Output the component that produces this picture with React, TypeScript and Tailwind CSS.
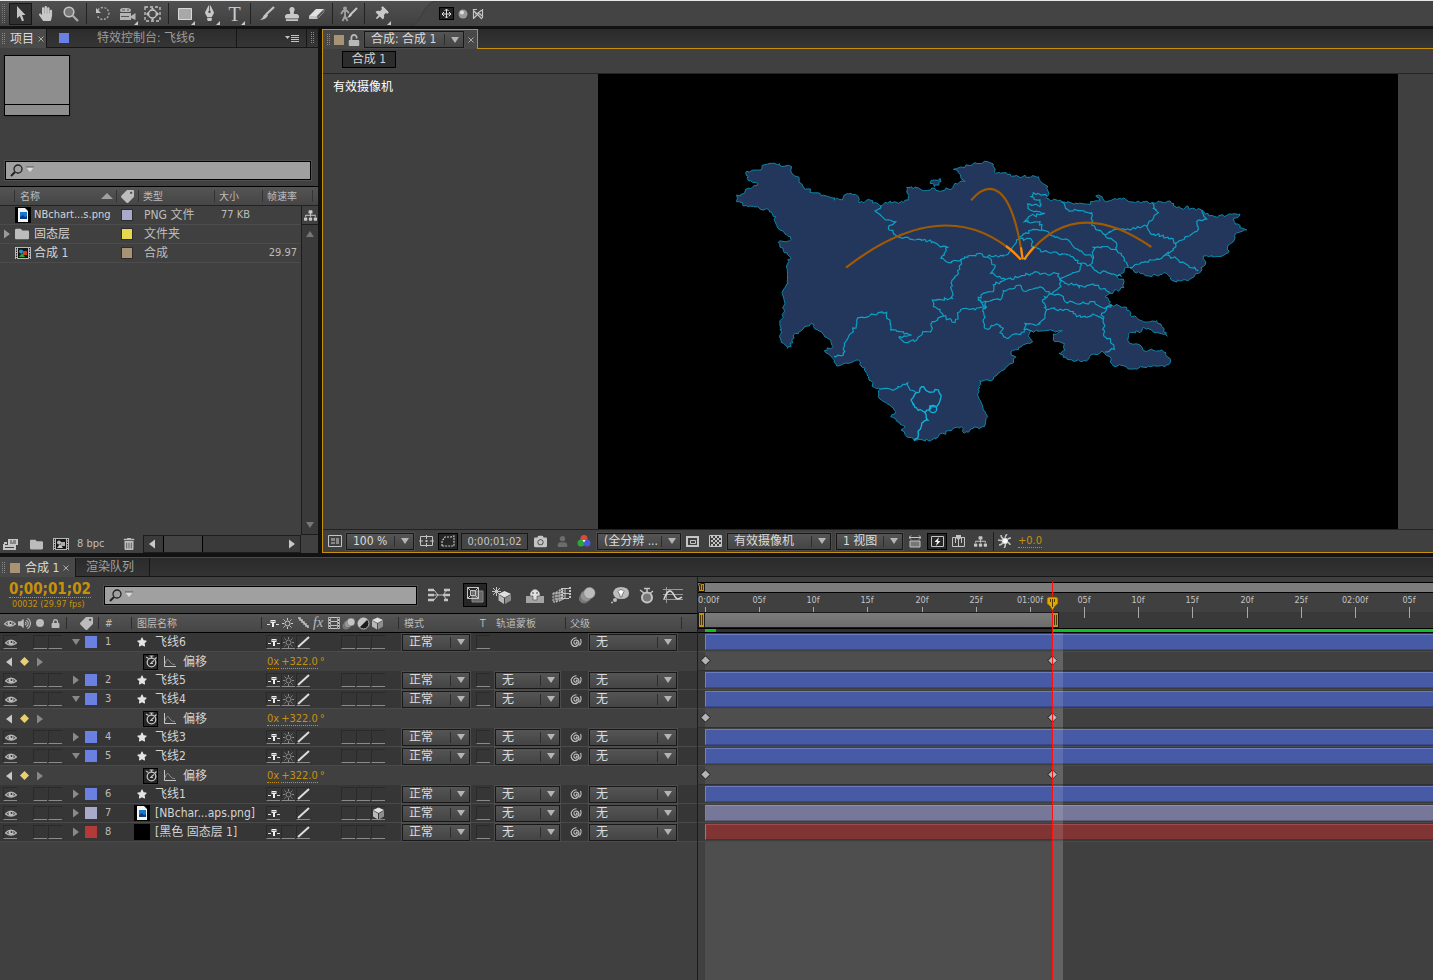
import type { ReactNode } from 'react';
import {
    FaHandPaper, FaStamp, FaThumbtack, FaFolder, FaTrashAlt, FaTag, FaSitemap,
    FaCamera, FaUser, FaLock, FaUnlock, FaVolumeUp, FaStar, FaPenNib
} from 'react-icons/fa';

type Point = [number, number];

interface Layer {
    id: number;
    name: string;
    color: string;
    bar: string;
    kind: 'shape' | 'image' | 'solid';
    open?: boolean;
    matte?: boolean;
    cube?: boolean;
}

const BLUE = 'bg-[#6a80e2]';
const BLUE_BAR = 'bg-[#475aa6] border-t-[#6c7cc0] border-b-[#37488e]';

const layers: Layer[] = [
    { id: 1, name: '飞线6', color: BLUE, bar: BLUE_BAR, kind: 'shape', open: true },
    { id: 2, name: '飞线5', color: BLUE, bar: BLUE_BAR, kind: 'shape', matte: true },
    { id: 3, name: '飞线4', color: BLUE, bar: BLUE_BAR, kind: 'shape', open: true, matte: true },
    { id: 4, name: '飞线3', color: BLUE, bar: BLUE_BAR, kind: 'shape', matte: true },
    { id: 5, name: '飞线2', color: BLUE, bar: BLUE_BAR, kind: 'shape', open: true, matte: true },
    { id: 6, name: '飞线1', color: BLUE, bar: BLUE_BAR, kind: 'shape', matte: true },
    { id: 7, name: '[NBchar...aps.png]', color: 'bg-[#a9a9cb]', bar: 'bg-[#77779a] border-t-[#8e8eb0] border-b-[#5c5c7a]', kind: 'image', matte: true, cube: true },
    { id: 8, name: '[黑色 固态层 1]', color: 'bg-[#b43a3a]', bar: 'bg-[#803434] border-t-[#a04a4a] border-b-[#662424]', kind: 'solid', matte: true },
];

/* ---------- map ---------- */

const coast: Point[] = [
    [35, 135], [58, 130], [62, 118], [98, 100], [72, 93], [62, 68], [88, 60], [108, 60], [112, 46], [135, 40], [180, 48], [200, 50],
    [198, 65], [222, 82], [228, 100], [240, 118], [285, 130], [290, 138], [352, 150], [358, 135], [378, 130], [400, 140], [402, 158],
    [435, 150], [452, 158], [468, 168], [480, 157], [535, 158], [550, 150], [545, 112], [580, 114], [590, 120], [620, 114], [638, 122],
    [685, 112], [690, 100], [720, 95], [700, 68], [685, 58], [720, 52], [745, 40], [778, 34], [805, 42], [812, 70], [855, 72], [870, 78],
    [940, 80], [945, 92], [968, 108], [972, 132], [965, 145], [1010, 156], [1080, 162], [1125, 152], [1112, 138], [1125, 138], [1138, 153],
    [1170, 145], [1195, 144], [1210, 154], [1280, 158], [1335, 153], [1345, 168], [1375, 178], [1385, 168], [1392, 178], [1430, 180],
    [1440, 192], [1470, 200], [1545, 192], [1525, 205], [1530, 222], [1565, 240], [1532, 252], [1525, 275], [1510, 285], [1508, 310],
    [1485, 320], [1435, 318], [1442, 335], [1420, 370], [1390, 392], [1345, 393], [1325, 370], [1270, 378], [1225, 360], [1205, 352],
    [1190, 370], [1175, 380], [1197, 395], [1197, 412], [1155, 430], [1140, 440], [1160, 465], [1205, 472], [1220, 500], [1250, 512],
    [1295, 512], [1310, 530], [1327, 558], [1280, 540], [1255, 532], [1250, 543], [1210, 552], [1212, 578], [1245, 585], [1255, 602],
    [1310, 600], [1337, 630], [1325, 645], [1270, 648], [1225, 657], [1195, 647], [1165, 648], [1155, 620], [1135, 606], [1105, 612],
    [1090, 628], [1050, 634], [1015, 622], [1002, 610], [1020, 600], [1018, 580], [990, 575], [985, 552], [1012, 542], [920, 543],
    [910, 558], [923, 575], [890, 590], [858, 605], [872, 622], [862, 640], [830, 662], [805, 688], [765, 692], [760, 740], [788, 800],
    [778, 830], [745, 835], [718, 850], [710, 830], [670, 842], [620, 870], [568, 872], [528, 840], [540, 830], [497, 800], [512, 785],
    [495, 765], [460, 740], [465, 718], [448, 712], [430, 680], [400, 630], [385, 635], [335, 648], [328, 630], [298, 602], [325, 590],
    [305, 562], [258, 520], [205, 555], [198, 590], [188, 595], [168, 570], [165, 520], [178, 480], [172, 430], [190, 400], [188, 330],
    [197, 322], [178, 308], [160, 278], [198, 268], [165, 240], [150, 215], [152, 200], [132, 180], [70, 170], [35, 155], [35, 135],
];

const island: Point[] = [[615, 100], [628, 90], [645, 85], [648, 95], [628, 110], [615, 100]];

const borders: Point[][] = [
    [[468, 168], [450, 183], [482, 210], [512, 215], [490, 235], [515, 258], [540, 262], [565, 270], [600, 268], [640, 285], [668, 292], [648, 325], [670, 338], [708, 328], [765, 310], [775, 320], [845, 315], [860, 295], [875, 270], [920, 240], [950, 240], [945, 215], [898, 215], [910, 200], [960, 190], [915, 180], [908, 162], [945, 170], [945, 150], [918, 140], [925, 128], [965, 138]],
    [[708, 328], [700, 370], [680, 395], [682, 445], [622, 450], [625, 470], [645, 478], [655, 498], [690, 518], [705, 485], [725, 475], [750, 480], [785, 470]],
    [[328, 618], [355, 615], [358, 580], [385, 545], [395, 510], [435, 497], [485, 487], [497, 540], [560, 555], [522, 562], [538, 577], [575, 570], [600, 545], [620, 540], [622, 515], [655, 498]],
    [[790, 322], [810, 345], [797, 370], [840, 388]],
    [[785, 470], [760, 450], [775, 430], [805, 425], [805, 405], [840, 388], [885, 380], [930, 365], [945, 373], [995, 370], [1005, 385], [1065, 360], [1065, 340], [1035, 315], [955, 305], [920, 290], [920, 270], [885, 265]],
    [[765, 455], [785, 455], [830, 445], [835, 422], [885, 405], [895, 423], [945, 410], [980, 432], [1008, 410], [1005, 385]],
    [[1005, 385], [1020, 400], [1080, 412], [1105, 402], [1155, 428]],
    [[980, 432], [1015, 440], [1020, 455], [1080, 460], [1100, 455], [1140, 475], [1160, 465]],
    [[980, 432], [952, 450], [965, 480], [960, 505], [935, 525], [900, 520], [898, 540], [920, 543]],
    [[965, 478], [1020, 478], [1045, 485], [1055, 500], [1110, 495], [1135, 508]],
    [[1160, 465], [1130, 490], [1135, 508], [1138, 560], [1155, 565], [1168, 598], [1140, 606]],
    [[783, 455], [775, 475], [777, 530], [790, 538], [815, 522], [835, 535], [825, 548], [845, 565], [900, 545]],
    [[1010, 156], [1030, 180], [1100, 188], [1100, 225], [1140, 255], [1175, 280], [1175, 300], [1155, 295], [1130, 290], [1105, 292], [1105, 325], [1095, 345], [1110, 362], [1155, 370], [1190, 380]],
    [[1140, 255], [1170, 238], [1220, 238], [1265, 228], [1280, 212], [1300, 188], [1285, 175], [1280, 158]],
    [[1265, 228], [1275, 248], [1340, 265], [1352, 280], [1345, 300], [1320, 315], [1310, 325], [1260, 335], [1215, 352]],
    [[1352, 280], [1415, 245], [1420, 210], [1445, 207], [1430, 182]],
    [[1320, 315], [1360, 330], [1420, 362]],
    [[1175, 300], [1195, 320], [1210, 350]],
    [[950, 240], [990, 262], [1030, 270], [1050, 295], [1105, 325]],
    [[1065, 340], [1095, 345]],
    [[465, 718], [510, 718], [548, 698], [555, 720], [575, 728]],
];

const brightBorders: Point[][] = [
    [[575, 728], [558, 750], [570, 772], [600, 788], [612, 780], [615, 768], [635, 770], [648, 735], [640, 720], [610, 725], [590, 710], [575, 728]],
    [[600, 788], [608, 810], [590, 820], [580, 855], [568, 872]],
];

// breaks every segment into short steps and nudges them so borders look surveyed
function rough(points: Point[]) {
    let d = `M${points[0][0]} ${points[0][1]}`;
    for (let i = 1; i < points.length; i++) {
        const [ax, ay] = points[i - 1];
        const [bx, by] = points[i];
        const steps = Math.max(1, Math.round(Math.hypot(bx - ax, by - ay) / 7));
        for (let s = 1; s <= steps; s++) {
            const t = s / steps;
            const n = Math.sin(ax * 12.9 + by * 78.2 + s * 37.7) * 43758.5;
            const m = Math.sin(ay * 39.3 + bx * 11.1 + s * 83.1) * 24634.6;
            const jx = s === steps ? 0 : (n - Math.floor(n) - 0.5) * 9;
            const jy = s === steps ? 0 : (m - Math.floor(m) - 0.5) * 9;
            d += `L${(ax + (bx - ax) * t + jx).toFixed(1)} ${(ay + (by - ay) * t + jy).toFixed(1)}`;
        }
    }
    return d;
}

function FlightMap() {
    return (
        <svg viewBox="-381 -228 2400 1365" className="w-[800px] max-w-full h-[455px]" fill="none">
            <path d={rough(coast)} fill="#22375b" stroke="#0f86a6" strokeWidth="3" />
            <path d={rough(island)} fill="#22375b" stroke="#0f86a6" strokeWidth="3" />
            {borders.map((b, i) => <path key={i} d={rough(b)} stroke="#0ba4c8" strokeWidth="3.500" />)}
            {brightBorders.map((b, i) => <path key={i} d={rough(b)} stroke="#10b4dc" strokeWidth="4" />)}
            <circle cx="624" cy="777" r="11" stroke="#10b4dc" strokeWidth="4" />
            <g stroke="#a05a04" strokeWidth="6.500">
                <path d="M363 353C560 200 740 180 888 328" />
                <path d="M738 151C790 90 860 90 893 328" />
                <path d="M898 328C1000 188 1130 188 1279 291" />
            </g>
            <path d="M843 288Q866 304 887 329M888 292L893 328M928 290Q912 306 898 329" stroke="#ff8c0c" strokeWidth="6.500" />
        </svg>
    );
}

/* ---------- small icons ---------- */

function Svg({ w, h, children, className = '' }: { w: number; h: number; children: ReactNode; className?: string }) {
    return (
        <svg width={w} height={h} viewBox={`0 0 ${w} ${h}`} fill="none" stroke="#c4c4c4" className={`shrink-0 ${className}`} aria-hidden="true">
            {children}
        </svg>
    );
}

const Grip = () => (
    <Svg w={4} h={12}>
        <path d="M.5 0V12M2.500 0V12" stroke="#8a8a8a" strokeDasharray="1 1" />
    </Svg>
);

const Magnifier = () => (
    <Svg w={24} h={13}>
        <circle cx="8" cy="5" r="4" stroke="#222" strokeWidth="1.300" />
        <path d="M5 8L1 12" stroke="#222" strokeWidth="2" />
        <path d="M16 3H24L20 8Z" fill="#dcdcdc" stroke="none" />
        <path d="M16 3H24" stroke="#555" />
    </Svg>
);

const Eye = () => (
    <Svg w={12} h={9}>
        <path d="M.5 5Q6 -1 11.500 5Q6 9.500 .5 5Z" fill="#4a4a4a" stroke="#b5b5b5" strokeWidth="1.200" />
        <circle cx="6" cy="4.500" r="2.500" fill="#c0c0c0" stroke="none" />
        <circle cx="6.500" cy="4" r="1" fill="#333" stroke="none" />
    </Svg>
);

const Shy = () => (
    <Svg w={12} h={8}>
        <path d="M0 5.500H3M9 5.500H12" stroke="#ddd" />
        <path d="M3.500 1H8.500V4H7V8H5V4H3.500Z" fill="#eee" stroke="none" />
        <path d="M4.500 2.500H5.500M6.500 2.500H7.500" stroke="#222" />
    </Svg>
);

const Sun = ({ color = '#8c8c8c' }: { color?: string }) => (
    <Svg w={11} h={11}>
        <circle cx="5.500" cy="5.500" r="2.500" stroke={color} />
        <path d="M5.500 0V2M5.500 9V11M0 5.500H2M9 5.500H11M1.500 1.500L2.800 2.800M8.200 8.200L9.500 9.500M1.500 9.500L2.800 8.200M8.200 2.800L9.500 1.500" stroke={color} />
    </Svg>
);

const Slash = () => <Svg w={13} h={12}><path d="M1 11L12 1" stroke="#dcdcdc" strokeWidth="2" /></Svg>;

const Pickwhip = () => (
    <Svg w={12} h={11}>
        <path d="M6 5.500Q7.500 4.500 7 6.500Q5 8 4 6Q3.500 3 6.500 3Q9 3.500 9 6.500Q7.500 10 4 9.500Q1 8 1.200 4.500Q3 .8 6.500 .8M10.500 2Q12 6 9.500 8.500" stroke="#c0c0c0" strokeWidth="1.100" />
    </Svg>
);

const Down = ({ color = '#b4b4b4' }: { color?: string }) => <Svg w={8} h={6}><path d="M0 0H8L4 6Z" fill={color} stroke="none" /></Svg>;
const Right = ({ color = '#9a9a9a' }: { color?: string }) => <Svg w={6} h={10}><path d="M0 .5L6 5L0 9.500Z" fill={color} stroke="none" /></Svg>;
const Left = ({ color = '#c8c8c8' }: { color?: string }) => <Svg w={6} h={10}><path d="M6 .5L0 5L6 9.500Z" fill={color} stroke="none" /></Svg>;

const PngFile = () => (
    <Svg w={16} h={16}>
        <path d="M0 0H16V16H0Z" fill="#000" stroke="none" />
        <path d="M3 1H10L13 4V15H3Z" fill="#f4f4f4" stroke="none" />
        <path d="M5 5H12V12H5Z" fill="#1878d0" stroke="none" />
        <path d="M5 12V10L8 8L10 10L12 9V12Z" fill="#0a3c80" stroke="none" />
    </Svg>
);

const CompItem = ({ color = true }: { color?: boolean }) => (
    <Svg w={16} h={12}>
        <path d="M0 0H16V12H0Z" fill="#b8b8b8" stroke="none" />
        <path d="M1.500 1V12M14.500 1V12" stroke="#222" strokeDasharray="1.500 1" />
        <path d="M3 1H13V11H3Z" fill="#161616" stroke="none" />
        <circle cx="6" cy="4.500" r="2" fill={color ? '#2b8fd0' : '#bbb'} stroke="none" />
        <path d="M8 4H12V8H8Z" fill={color ? '#d04020' : '#aaa'} stroke="none" />
        <path d="M4 10L7 6L10 10Z" fill={color ? '#28a838' : '#ccc'} stroke="none" />
    </Svg>
);

const Film = () => (
    <Svg w={12} h={12}>
        <path d="M1.500 0V12M10.500 0V12" strokeWidth="2.500" />
        <path d="M1.500 1V12M10.500 1V12" stroke="#333" strokeDasharray="1 2" />
        <path d="M3 .5H9M3 4.500H9M3 8.500H9M3 11.500H9" />
    </Svg>
);

const Balls = () => (
    <Svg w={14} h={13}>
        <circle cx="4" cy="9" r="3.500" fill="#777" stroke="none" />
        <circle cx="6" cy="7" r="3.800" fill="#999" stroke="#555" strokeWidth=".5" />
        <circle cx="9" cy="5" r="4" fill="#c4c4c4" stroke="#555" strokeWidth=".5" />
    </Svg>
);

const Half = () => (
    <Svg w={13} h={13}>
        <circle cx="6.500" cy="6.500" r="5.500" fill="#1c1c1c" />
        <path d="M2.500 10.500A5.500 5.500 0 0 1 10.500 2.500Z" fill="#c4c4c4" stroke="none" />
    </Svg>
);

const Cube = () => (
    <Svg w={13} h={13}>
        <path d="M6.500 .5L12 3L6.500 6L1 3Z" fill="#e0e0e0" stroke="none" />
        <path d="M1 3.500L6 6.500V12.500L1 9.500Z" fill="#b8b8b8" stroke="none" />
        <path d="M12 3.500L7 6.500V12.500L12 9.500Z" fill="#8e8e8e" stroke="none" />
    </Svg>
);

const Diamond = () => (
    <Svg w={11} h={11} className="block">
        <path d="M5.500 .8L10.200 5.500L5.500 10.200L.8 5.500Z" fill="#b4b4b4" stroke="#181818" />
    </Svg>
);

const Stopwatch = () => (
    <Svg w={12} h={13}>
        <circle cx="6.500" cy="7.500" r="4.300" strokeWidth="1.300" />
        <path d="M6.500 3V1M4.500 1H8.500M1 2L3.500 3.500M9.500 4.500L11.500 2.500M6 8L9 5.500M5 8.500H8" strokeWidth="1.200" />
    </Svg>
);

const Graph = () => (
    <Svg w={12} h={11}>
        <path d="M.5 0V10.500H12" stroke="#c8c8c8" />
        <path d="M1 8Q3 0 6 6Q8 9 11 8.500" stroke="#8a8a8a" />
    </Svg>
);

/* ---------- shared controls ---------- */

function Dropdown({ label, value, width }: { label: string; value: string; width: string }) {
    return (
        <div className={`relative shrink-0 h-[17px] border border-[#181818] bg-linear-to-b from-[#555555] to-[#444444] outline outline-[#4c4c4c] ${width}`}>
            <select aria-label={label} className="appearance-none block w-full h-full pl-[6px] pr-[18px] text-[12px] leading-[15px] text-[#dcdcdc] outline-none">
                <option>{value}</option>
            </select>
            <span className="absolute right-0 top-0 h-full flex items-center gap-[6px] pr-1 pointer-events-none">
                <span className="w-px h-[11px] bg-[#2c2c2c]" />
                <Down />
            </span>
        </div>
    );
}

function Search({ id, className }: { id: string; className: string }) {
    return (
        <label htmlFor={id} className={`flex shrink-0 items-center h-[19px] px-1 bg-[#a0a0a0] border border-black outline outline-[#505050] ${className}`}>
            <Magnifier />
            <input id={id} aria-label="搜索" className="flex-1 min-w-0 text-[11px] text-black outline-none" />
        </label>
    );
}

function Close() {
    return (
        <button className="px-1 flex items-center" aria-label="关闭">
            <Svg w={6} h={6}><path d="M.5 .5L5.500 5.500M5.500 .5L.5 5.500" stroke="#aaa" /></Svg>
        </button>
    );
}

/* ---------- tool bar ---------- */

function Tool({ name, children, active, more }: { name: string; children: ReactNode; active?: boolean; more?: boolean }) {
    return (
        <button title={name} className="relative w-[25px] h-[24px] flex items-center justify-center text-[#c8c8c8]">
            {active ? <span className="w-[23px] h-[22px] flex items-center justify-center bg-[#303030] border border-[#161616]">{children}</span> : children}
            {more && <span className="absolute right-[2px] bottom-px"><Svg w={4} h={4}><path d="M4 0V4H0Z" fill="#c8c8c8" stroke="none" /></Svg></span>}
        </button>
    );
}

const ToolGap = () => <span className="w-[7px] flex justify-center shrink-0"><span className="w-px h-[21px] bg-[#222]" /></span>;

function ToolBar() {
    return (
        <header className="flex items-center h-[26px] border-t border-[#e8e8e8] bg-linear-to-b from-[#505050] to-[#404040]">
            <span className="w-2 pl-[2px]"><Svg w={4} h={20}><path d="M.5 0V20M2.500 0V20" stroke="#7a7a7a" strokeDasharray="1 1" /></Svg></span>
            <Tool name="选择" active>
                <Svg w={10} h={16}><path d="M1 0L9.500 9H6L8 14.500L6 15.300L3.800 10L1 12.500Z" fill="#c4c4c4" stroke="none" /></Svg>
            </Tool>
            <Tool name="手形"><FaHandPaper size={15} /></Tool>
            <Tool name="缩放">
                <Svg w={16} h={16}>
                    <circle cx="6" cy="6" r="4.800" fill="#777" strokeWidth="1.600" />
                    <path d="M9.500 9.500L15 15" strokeWidth="2.200" stroke="#aaa" />
                </Svg>
            </Tool>
            <ToolGap />
            <Tool name="旋转">
                <Svg w={16} h={15}>
                    <path d="M3 4A6 6 0 1 1 2.500 10" stroke="#aaa" strokeWidth="1.400" strokeDasharray="2 1.500" />
                    <path d="M1 2V7H6Z" fill="#c4c4c4" stroke="none" />
                </Svg>
            </Tool>
            <Tool name="摄像机" more>
                <Svg w={17} h={14}>
                    <path d="M1 6H12V13H1ZM12 9L16.500 6V13L12 11Z" fill="#b4b4b4" stroke="none" />
                    <path d="M1 3.500Q1 1 4 1H8Q12 1 12 3.500Q12 5 9 5H4Q1 5 1 3.500Z" fill="#b4b4b4" stroke="none" />
                    <path d="M3 3H6M8 3H10M2 9.500H10" stroke="#555" />
                </Svg>
            </Tool>
            <Tool name="轴心点">
                <Svg w={17} h={16}>
                    <path d="M1 1H16V15H1Z" strokeDasharray="3 2" strokeWidth="1.300" />
                    <circle cx="8.500" cy="8" r="4" strokeWidth="1.500" />
                    <path d="M6.500 3.500L8.500 1.500L10.500 3.500ZM6.500 12.500L8.500 14.500L10.500 12.500ZM4 6L2 8L4 10ZM13 6L15 8L13 10Z" fill="#c4c4c4" stroke="none" />
                </Svg>
            </Tool>
            <ToolGap />
            <Tool name="矩形遮罩" more><Svg w={14} h={12}><path d="M.5 .5H13.500V11.500H.5Z" fill="#a8a8a8" stroke="#d8d8d8" /></Svg></Tool>
            <Tool name="钢笔" more><span className="-rotate-[225deg]"><FaPenNib size={13} /></span></Tool>
            <Tool name="文字" more><span className="font-['Liberation_Serif',serif] text-[20px] leading-none">T</span></Tool>
            <ToolGap />
            <Tool name="画笔">
                <Svg w={16} h={15}>
                    <path d="M15 1L7 8.500" strokeWidth="2.200" />
                    <path d="M7.500 7.500L9 9.500Q7 13.500 1 14Q4 12 5 9Z" fill="#c4c4c4" stroke="none" />
                </Svg>
            </Tool>
            <Tool name="仿制图章"><FaStamp size={14} /></Tool>
            <Tool name="橡皮擦">
                <Svg w={17} h={12}>
                    <path d="M1 8L8 1H16L9 8Z" fill="#e0e0e0" stroke="none" />
                    <path d="M1 8H9V11H1Z" fill="#c4c4c4" stroke="none" />
                    <path d="M9 8L16 1V4L9 11Z" fill="#555" stroke="#aaa" strokeWidth=".6" />
                </Svg>
            </Tool>
            <ToolGap />
            <Tool name="Roto 画笔">
                <Svg w={18} h={16}>
                    <circle cx="5" cy="2.500" r="2" fill="#a0a0a0" stroke="none" />
                    <path d="M5 4V10L2.500 15M5 10L7.500 15M1 8L3 5H7L9 7" stroke="#a0a0a0" strokeWidth="1.800" />
                    <path d="M17 2L11 8" strokeWidth="2" />
                    <path d="M11 7L12 9Q10 12 7 12Q9 10 9.500 8Z" fill="#d0d0d0" stroke="none" />
                </Svg>
            </Tool>
            <ToolGap />
            <Tool name="木偶大头针" more><span className="rotate-45"><FaThumbtack size={14} /></span></Tool>
            <Svg w={44} h={25}><path d="M18 25C30 22 30 0 44 0V25Z" fill="#454545" stroke="none" /><path d="M18 25C30 22 30 0 44 0" stroke="#3c3c3c" /></Svg>
            <div className="flex-1 self-stretch flex items-center gap-[4px] bg-[#444] pl-[2px]">
                <button title="本地轴" className="w-[15px] h-[13px] flex items-center justify-center bg-[#222] border border-black">
                    <Svg w={11} h={11}><path d="M5.500 1V10M1 6H10M3.500 3L5.500 1L7.500 3M3 4L1 6L3 8M8 4L10 6L8 8M4 8.500L5.500 10L7 8.500" stroke="#ddd" /></Svg>
                </button>
                <button title="世界轴"><Svg w={10} h={10}><circle cx="5" cy="5" r="4.500" fill="#9a9a9a" stroke="none" /><circle cx="4" cy="3.500" r="2" fill="#ddd" stroke="none" /></Svg></button>
                <button title="视图轴"><Svg w={12} h={12}><path d="M1.500 1V11M1 1.500H5M10.500 1V10M10.500 1.500L6 5L10.500 8M2 3L10 11M2 10L7 5M3 6H9" strokeWidth="1.200" /></Svg></button>
            </div>
        </header>
    );
}

/* ---------- project panel ---------- */

const items = [
    { icon: <PngFile />, name: 'NBchart...s.png', color: 'bg-[#a9a9cb]', type: 'PNG 文件', size: '77 KB', rate: '' },
    { icon: <FaFolder size={14} className="text-[#bcbcbc]" />, name: '固态层', color: 'bg-[#e6d94c]', type: '文件夹', size: '', rate: '', folder: true },
    { icon: <CompItem />, name: '合成 1', color: 'bg-[#a89474]', type: '合成', size: '', rate: '29.97' },
];

function ProjectPanel() {
    return (
        <section className="w-[318px] shrink-0 flex flex-col bg-[#404040]">
            <div className="flex h-[19px] bg-linear-to-b from-[#2c2c2c] to-[#363636]">
                <div className="w-[46px] flex items-center pl-[2px] gap-1 bg-[#4a4a4a] text-[#dcdcdc] text-[12px]">
                    <Grip />
                    <button className="shrink-0">项目</button>
                    <Svg w={6} h={6}><path d="M.5 .5L5.500 5.500M5.500 .5L.5 5.500" stroke="#aaa" /></Svg>
                </div>
                <button className="w-[191px] flex items-center pl-3 border-x border-b border-[#161616] text-[12px] text-[#9c9c9c]">
                    <span className={`w-[10px] h-[10px] ${BLUE}`} />
                    <span className="flex-1 pr-[13px]">特效控制台: 飞线6</span>
                </button>
                <div className="flex-1 flex items-center justify-end pr-[7px] border-b border-[#161616]">
                    <button title="面板菜单">
                        <Svg w={14} h={9}><path d="M0 2H5L2.500 5Z" fill="#c4c4c4" stroke="none" /><path d="M6 1.500H14M6 3.500H14M6 5.500H14M6 7.500H14" /></Svg>
                    </button>
                </div>
                <div className="w-[12px] flex items-center justify-center border-l border-b border-[#161616]"><Grip /></div>
            </div>

            <div className="p-1 pt-[7px] h-[112px]">
                <div className="w-[66px] h-[61px] border border-black bg-[#8e8e8e] flex flex-col justify-end shadow">
                    <div className="h-[11px] border-t border-black" />
                </div>
            </div>
            <Search id="project-search" className="mx-[5px] mr-[7px] mt-[1px] mb-[6px]" />

            <div className="flex-1 flex border-t border-black">
                <div className="flex-1">
                    <table className="w-full table-fixed border-separate border-spacing-0 text-left text-[#bcbcbc]">
                        <colgroup>
                            <col className="w-[14px]" /><col className="w-[102px]" /><col className="w-[22px]" /><col className="w-[76px]" /><col className="w-[48px]" /><col />
                        </colgroup>
                        <thead>
                            <tr className="h-[19px] text-[10px] bg-linear-to-b from-[#545454] to-[#454545] [&>th]:p-0 [&>th]:font-normal [&>th]:border-b [&>th]:border-[#222]">
                                <th />
                                <th>
                                    <div className="flex items-center justify-between h-3 border-l border-[#333] pl-[5px] pr-[3px]">
                                        名称
                                        <Svg w={12} h={6}><path d="M0 6L6 0L12 6Z" fill="#a0a0a0" stroke="none" /></Svg>
                                    </div>
                                </th>
                                <th><div className="flex items-center justify-center h-3 border-l border-[#333]"><FaTag size={13} className="-scale-x-100 shrink-0" /></div></th>
                                <th><div className="flex items-center h-3 border-l border-[#333] pl-1">类型</div></th>
                                <th><div className="flex items-center h-3 border-l border-[#333] pl-1">大小</div></th>
                                <th><div className="flex items-center h-3 border-l border-[#333] pl-1 whitespace-nowrap">帧速率</div></th>
                            </tr>
                        </thead>
                        <tbody>
                            {items.map((it) => (
                                <tr key={it.name} className="h-[19px] text-[12px] leading-[18px] [&>td]:p-0 [&>td]:border-b [&>td]:border-[#4c4c4c]">
                                    <td>{it.folder && <button aria-label="展开" className="flex pl-1"><Right /></button>}</td>
                                    <td><div className={`flex items-center h-[18px] whitespace-nowrap pl-px text-[#d4d4d4] ${it.size ? 'text-[11px]' : ''}`}><span className="w-[19px] shrink-0">{it.icon}</span>{it.name}</div></td>
                                    <td><div className={`w-[10px] h-[10px] mx-auto ${it.color} outline outline-[#2c2c2c]`} /></td>
                                    <td className="!pl-[6px] whitespace-nowrap">{it.type}</td>
                                    <td className="!pl-[7px] whitespace-nowrap text-[11px]">{it.size}</td>
                                    <td className="!pr-1 text-right text-[11px]">{it.rate}</td>
                                </tr>
                            ))}
                        </tbody>
                    </table>
                </div>
                <div className="w-[17px] flex flex-col">
                    <div className="h-[19px] bg-linear-to-b from-[#545454] to-[#454545] border-b border-[#222] flex items-center pl-[11px]"><span className="w-px h-3 bg-[#333]" /></div>
                    <button title="流程图" className="h-[19px] flex items-center justify-center border-l border-b border-[#1c1c1c] text-[#c8c8c8]"><FaSitemap size={13} /></button>
                    <div className="flex-1 flex flex-col items-center justify-between py-[6px] border-l border-b border-[#1c1c1c] bg-[#3a3a3a]">
                        <span className="rotate-180"><Down color="#777" /></span>
                        <Down color="#777" />
                    </div>
                </div>
            </div>

            <div className="flex items-center h-[18px] text-[#bcbcbc] text-[11px]">
                <button title="解释素材" className="w-[25px] pl-[3px]">
                    <Svg w={16} h={12}><path d="M5 1H15V7H5Z" fill="#c8c8c8" stroke="none" /><path d="M7 3H9M10 3H13M7 5H13" stroke="#444" /><path d="M1 5H4M0 8H12V11H1V6" strokeWidth="2" /></Svg>
                </button>
                <button title="新建文件夹" className="w-[22px] flex justify-center"><FaFolder size={13} /></button>
                <button title="新建合成" className="w-[28px] flex justify-center"><CompItem color={false} /></button>
                <button className="w-[44px] pl-[2px] text-left whitespace-nowrap">8 bpc</button>
                <button title="删除" className="w-[20px] flex justify-center"><FaTrashAlt size={12} /></button>
                <div className="flex-1 flex items-center h-full border border-[#1c1c1c] bg-[#3a3a3a] ml-1 pl-[5px] pr-[5px] mr-[17px]">
                    <Left />
                    <span className="w-[40px] h-full ml-2 border-x border-black bg-[#444]" />
                    <span className="ml-auto"><Right color="#c8c8c8" /></span>
                </div>
            </div>
        </section>
    );
}

/* ---------- composition panel ---------- */

function FooterIcon({ name, width, boxed, children }: { name: string; width: string; boxed?: boolean; children: ReactNode }) {
    return (
        <button title={name} className={`shrink-0 h-[17px] flex items-center justify-center text-[#c4c4c4] ${width} ${boxed ? 'bg-[#262626] border border-black' : ''}`}>
            {children}
        </button>
    );
}

function CompPanel() {
    return (
        <section className="flex-1 min-w-0 flex flex-col bg-[#404040] border-l border-[#c8910c]">
            <div className="flex h-[20px]">
                <div className="w-[155px] shrink-0 flex items-center pl-1 border-t border-r border-[#c8910c] bg-[#484848] text-[12px]">
                    <Grip />
                    <span className="w-[10px] h-[10px] shrink-0 ml-[3px] bg-[#a89474]" />
                    <button title="锁定" className="ml-1 text-[#b8b8b8]"><FaUnlock size={12} /></button>
                    <div className="ml-1"><Dropdown label="合成" value="合成: 合成 1" width="w-[100px]" /></div>
                    <Close />
                </div>
                <div className="flex-1 border-b border-[#c8910c] bg-linear-to-b from-[#2a2a2a] to-[#363636]" />
            </div>
            <div className="h-[25px] flex items-start pt-[2px] pl-[19px] border-b border-[#242424]">
                <button className="h-[17px] w-[54px] bg-[#2c2c2c] border border-black text-[12px] leading-[15px] text-[#d4d4d4]">合成 1</button>
            </div>

            <div className="relative flex h-[455px]">
                <span className="absolute left-[10px] top-[5px] text-[12px] leading-[16px] text-white">有效摄像机</span>
                <div className="w-[275px] shrink-0" />
                <div className="flex-1 min-w-0 bg-black"><FlightMap /></div>
                <div className="w-[35px] shrink-0" />
            </div>

            <div className="flex items-center h-[24px] border-t border-[#222] border-b border-b-[#c8910c] text-[12px] text-[#c4c4c4]">
                <FooterIcon name="总在最前" width="w-[23px]"><Svg w={14} h={12}><path d="M.5 .5H13.500V11.500H.5Z" /><path d="M3 3H7V6H3ZM8 3H11V9H8ZM3 7H7V9H3Z" fill="#888" stroke="none" /></Svg></FooterIcon>
                <Dropdown label="放大率" value="100 %" width="w-[68px]" />
                <FooterIcon name="安全框" width="w-[24px]"><Svg w={15} h={13}><path d="M1.500 1.500H13.500V10.500H1.500ZM7.500 0V4M7.500 8V12M0 6H4M11 6H15M6 6H9M7.500 5V7" /></Svg></FooterIcon>
                <FooterIcon name="遮罩" width="w-[20px]" boxed><Svg w={14} h={12}><path d="M1 11V6L4 2H10L13 1V11Z" strokeDasharray="2 1" strokeWidth="1.200" /></Svg></FooterIcon>
                <button className="ml-[3px] w-[67px] shrink-0 h-[17px] border border-[#181818] bg-[#464646] text-[11px] leading-[15px] whitespace-nowrap text-center">0;00;01;02</button>
                <FooterIcon name="快照" width="w-[24px]"><FaCamera size={13} /></FooterIcon>
                <FooterIcon name="显示快照" width="w-[20px]"><FaUser size={11} className="text-[#6c6c6c]" /></FooterIcon>
                <FooterIcon name="通道" width="w-[25px]">
                    <Svg w={15} h={14}>
                        <circle cx="7" cy="4.500" r="3.500" fill="#e04838" stroke="none" />
                        <circle cx="4" cy="9" r="3.500" fill="#28a838" stroke="none" />
                        <circle cx="10" cy="9" r="3.500" fill="#4858d8" stroke="none" />
                        <path d="M5.500 6H8.500L7 8.500Z" fill="#fff" stroke="none" />
                    </Svg>
                </FooterIcon>
                <Dropdown label="分辨率" value="(全分辨 ..." width="w-[84px]" />
                <FooterIcon name="区域" width="w-[23px]"><Svg w={13} h={11}><path d="M1 1H12V10H1Z" strokeWidth="2" /><path d="M4.500 4.500H9.500V7.500H4.500Z" /></Svg></FooterIcon>
                <FooterIcon name="透明网格" width="w-[23px]">
                    <Svg w={13} h={12}><path d="M.5 .5H12.500V11.500H.5Z" /><path d="M2 2H12M2 6H12M2 10H12" strokeWidth="2" strokeDasharray="2 2" /><path d="M4 4H12M4 8H12" strokeWidth="2" strokeDasharray="2 2" /></Svg>
                </FooterIcon>
                <Dropdown label="视图" value="有效摄像机" width="w-[104px]" />
                <span className="w-[5px] shrink-0" />
                <Dropdown label="视图布局" value="1 视图" width="w-[67px]" />
                <FooterIcon name="像素比" width="w-[24px]"><Svg w={12} h={13}><path d="M0 2.500H12M2 .5L0 2.500L2 4.500M10 .5L12 2.500L10 4.500" /><path d="M1 6H11V12H1Z" fill="#777" /></Svg></FooterIcon>
                <FooterIcon name="快速预览" width="w-[20px]" boxed><Svg w={15} h={13}><path d="M1.500 1.500H13.500V11.500H1.500Z" /><path d="M9 2L4.500 7H7L6 11L10.500 6H8Z" fill="#eee" stroke="none" /></Svg></FooterIcon>
                <FooterIcon name="时间线" width="w-[23px]"><Svg w={13} h={12}><path d="M.5 2.500H12.500V11.500H.5ZM3.500 3V8M9.500 3V8M6.500 4V11" /><path d="M4 0H9V3L6.500 5L4 3Z" fill="#c4c4c4" stroke="none" /></Svg></FooterIcon>
                <FooterIcon name="流程图" width="w-[21px]"><FaSitemap size={13} /></FooterIcon>
                <span className="w-[5px] shrink-0 flex justify-center"><span className="w-px h-[19px] bg-[#1c1c1c]" /></span>
                <FooterIcon name="重置曝光" width="w-[18px]">
                    <Svg w={14} h={14}>
                        <circle cx="7" cy="7" r="3" fill="#fff" stroke="none" />
                        <path d="M3 1Q3 4 6 5M9 0Q7 2 7 5M13 4Q10 4 9 6M12 11Q12 9 9 8M6 14Q8 12 7 9M1 11Q4 11 5 8M0 6Q3 7 5 6" strokeWidth="1.500" />
                    </Svg>
                </FooterIcon>
                <button className="ml-1 text-[11px] leading-[13px] text-[#c8910c] border-b border-dotted border-[#c8910c]">+0.0</button>
            </div>
        </section>
    );
}

/* ---------- timeline: layer list ---------- */

const box = 'w-[14px] h-[14px] flex items-center justify-center border-t border-l border-b border-t-[#2a2a2a] border-l-[#2a2a2a] border-b-[#8a8a8a]';

function Cell({ label, children }: { label: string; children?: ReactNode }) {
    return <button aria-label={label} className={`${box} shrink-0`}>{children}</button>;
}

function LayerRow({ layer }: { layer: Layer }) {
    return (
        <tr className="h-[19px] bg-[#363636] text-[#bcbcbc] [&>td]:p-0 [&>td]:border-b [&>td]:border-[#4a4a4a]">
            <td>
                <div className="flex items-center pl-[3px]">
                    <Cell label="显示"><Eye /></Cell>
                    <span className="w-4" />
                    <Cell label="独奏" />
                    <span className="w-px" />
                    <Cell label="锁定" />
                </div>
            </td>
            <td>
                <div className="flex items-center">
                    <button aria-label="展开图层" className="w-[19px] flex justify-center shrink-0">{layer.open ? <Down color="#888" /> : <Right color="#8a8a8a" />}</button>
                    <span className={`w-3 h-3 shrink-0 ${layer.color}`} />
                </div>
            </td>
            <td className="!pl-[7px]">{layer.id}</td>
            <td>
                <div className="flex items-center h-[18px] pl-[3px] whitespace-nowrap text-[12px] text-[#d4d4d4]">
                    <span className="w-[16px] mr-[5px] flex justify-center shrink-0">
                        {layer.kind === 'shape' && <FaStar size={10} className="text-[#e4e4e4]" />}
                        {layer.kind === 'image' && <PngFile />}
                        {layer.kind === 'solid' && <span className="w-4 h-4 bg-black" />}
                    </span>
                    {layer.name}
                </div>
            </td>
            <td>
                <div className="flex items-center gap-px pl-[5px]">
                    <Cell label="隐藏"><Shy /></Cell>
                    {layer.kind === 'shape' && <Cell label="连续栅格化"><Sun /></Cell>}
                    {layer.kind === 'image' && <span className="w-[14px]" />}
                    {layer.kind === 'solid' && <Cell label="连续栅格化" />}
                    <Cell label="品质"><Slash /></Cell>
                    <span className="w-[29px]" />
                    <Cell label="运动模糊" />
                    <Cell label="调节层" />
                    <Cell label="3D 图层">{layer.cube && <Cube />}</Cell>
                </div>
            </td>
            <td className="!pl-1"><div className="flex"><Dropdown label={`模式 ${layer.id}`} value="正常" width="w-[68px]" /></div></td>
            <td><div className="flex pl-[3px]"><Cell label="保持透明" /></div></td>
            <td>{layer.matte && <div className="flex pl-[2px]"><Dropdown label={`轨道蒙板 ${layer.id}`} value="无" width="w-[65px]" /></div>}</td>
            <td>
                <div className="flex items-center pl-[5px]">
                    <span className="w-[19px]"><Pickwhip /></span>
                    <Dropdown label={`父级 ${layer.id}`} value="无" width="w-[88px]" />
                </div>
            </td>
            <td />
        </tr>
    );
}

function PropertyRow() {
    return (
        <tr className="h-[19px] bg-[#404040] [&>td]:p-0">
            <td>
                <div className="flex items-center pl-[6px]">
                    <button aria-label="上一关键帧"><Left /></button>
                    <button aria-label="关键帧" className="mx-2"><Svg w={9} h={9}><path d="M4.500 0L9 4.500L4.500 9L0 4.500Z" fill="#e8d070" stroke="none" /></Svg></button>
                    <button aria-label="下一关键帧"><Right color="#888" /></button>
                </div>
            </td>
            <td />
            <td />
            <td>
                <div className="flex items-center pl-[12px] text-[12px] leading-[16px] text-[#d4d4d4]">
                    <button aria-label="码表" className="w-[15px] h-[16px] mr-[6px] flex items-center justify-center bg-[#262626] border border-black"><Stopwatch /></button>
                    <Graph />
                    <span className="ml-[7px]">偏移</span>
                </div>
            </td>
            <td>
                <div className="flex items-start gap-[2px] pl-[6px] text-[11px] leading-[13px] text-[#c8910c]">
                    <button className="border-b border-dotted border-[#c8910c]">0x</button>
                    <button className="border-b border-dotted border-[#c8910c]">+322.0</button>
                    <span>°</span>
                </div>
            </td>
            <td colSpan={5} />
        </tr>
    );
}

function LayerTable() {
    return (
        <table className="w-full table-fixed border-separate border-spacing-0 text-left text-[11px]">
            <colgroup>
                <col className="w-[66px]" /><col className="w-[32px]" /><col className="w-[33px]" /><col className="w-[130px]" /><col className="w-[137px]" />
                <col className="w-[75px]" /><col className="w-[20px]" /><col className="w-[72px]" /><col className="w-[116px]" /><col />
            </colgroup>
            <thead>
                <tr className="h-[20px] text-[10px] text-[#bcbcbc] bg-linear-to-b from-[#545454] to-[#454545] [&>th]:p-0 [&>th]:font-normal [&>th]:border-y [&>th]:border-black">
                    <th>
                        <div className="flex items-center pl-1">
                            <Eye />
                            <FaVolumeUp size={13} className="ml-[2px]" />
                            <span className="w-2 h-2 rounded-full bg-[#bcbcbc] ml-[5px]" />
                            <FaLock size={9} className="ml-[7px]" />
                        </div>
                    </th>
                    <th><div className="flex items-center h-3 border-l border-[#2c2c2c] pl-[13px]"><FaTag size={13} className="-scale-x-100" /></div></th>
                    <th><div className="flex items-center h-3 border-l border-[#2c2c2c] pl-[6px]">#</div></th>
                    <th><div className="flex items-center h-3 border-l border-[#2c2c2c] pl-[5px]">图层名称</div></th>
                    <th>
                        <div className="flex items-center h-3 border-l border-[#2c2c2c] pl-[5px]">
                            <span className="w-[15px]"><Shy /></span>
                            <span className="w-[15px]"><Sun color="#d0d0d0" /></span>
                            <span className="w-[16px]"><Svg w={12} h={12}><path d="M1 1H3V3H5V5H7V7H9V9H11V11" strokeWidth="1.500" /></Svg></span>
                            <span className="w-[15px] font-['Liberation_Serif',serif] italic text-[14px] leading-3">fx</span>
                            <span className="w-[14px]"><Film /></span>
                            <span className="w-[15px]"><Balls /></span>
                            <span className="w-[14px]"><Half /></span>
                            <Cube />
                        </div>
                    </th>
                    <th><div className="flex items-center h-3 border-l border-[#2c2c2c] pl-[5px]">模式</div></th>
                    <th className="!pl-[7px]">T</th>
                    <th className="!pl-[3px]">轨道蒙板</th>
                    <th><div className="flex items-center h-3 border-l border-[#2c2c2c] pl-[4px]">父级</div></th>
                    <th><div className="h-3 border-l border-[#2c2c2c]" /></th>
                </tr>
            </thead>
            <tbody>
                {layers.map((l) => [
                    <LayerRow key={l.id} layer={l} />,
                    l.open && <PropertyRow key={`${l.id}-offset`} />,
                ])}
            </tbody>
        </table>
    );
}

/* ---------- timeline: tracks ---------- */

// x of the first frame inside the track area, and the pixels of one frame
const ORIGIN = 7;
const FRAME = 10.83;
const frameX = (frame: number) => Math.round(ORIGIN + frame * FRAME);
const tickLabels = ['0:00f', '05f', '10f', '15f', '20f', '25f', '01:00f', '05f', '10f', '15f', '20f', '25f', '02:00f', '05f'];

function Keyframe({ frame }: { frame: number }) {
    return <span className="absolute top-[3px] -ml-[5px]" style={{ left: frameX(frame) }}><Diamond /></span>;
}

const Handle = ({ className = '' }: { className?: string }) => (
    <span className={`shrink-0 flex items-center justify-center gap-px w-[7px] bg-[#c8910c] border border-[#1a1a1a] ${className}`}>
        <span className="w-px h-2/3 bg-[#4a3400]" />
        <span className="w-px h-2/3 bg-[#4a3400]" />
    </span>
);

function Tracks() {
    return (
        <div className="relative flex-1 min-w-0 flex flex-col overflow-hidden border-l border-[#1c1c1c]">
            <div className="flex h-[11px] mt-[5px] border-y border-black bg-[#7c7c7c]"><Handle className="rounded-tl" /></div>

            <div className="relative h-[19px] text-[9px] leading-[14px] text-[#c4c4c4]">
                {tickLabels.map((t, i) => (
                    <span key={i}>
                        <span className={`absolute top-0 ${i ? '-translate-x-1/2' : ''}`} style={{ left: i ? frameX(i * 5) : 0 }}>{t}</span>
                        <span className={`absolute top-[14px] w-px bg-[#a8a8a8] ${i > 6 ? 'h-[11px]' : 'h-[5px]'}`} style={{ left: frameX(i * 5) }} />
                    </span>
                ))}
            </div>
            <div className="flex h-[17px] bg-[#393939] border-b border-black">
                <Handle />
                <div className="w-[347px] shrink-0 bg-linear-to-b from-[#7c7c7c] to-[#6c6c6c] border-y border-[#1a1a1a]" />
                <Handle />
            </div>
            <div className="flex h-[3px] border-b border-black bg-[#303030] box-content">
                <span className="w-[7px]" />
                <span className="w-[11px] bg-[#14bc28]" />
                <span className="w-[336px]" />
                <span className="flex-1 bg-[#14bc28]" />
            </div>

            <div className="relative flex-1">
                <span className="absolute inset-y-0 left-[7px] w-[358px] bg-[#4e4e4e]" />
                <div className="relative">
                    {layers.map((l) => (
                        <div key={l.id}>
                            <div className="h-[19px] pl-[7px] border-b border-[#4a4a4a] bg-[#363636]/60 pt-px">
                                <div className={`h-4 border-y border-l border-l-[#8080a0] ${l.bar}`} />
                            </div>
                            {l.open && (
                                <div className="relative h-[19px] border-b border-[#303030]">
                                    <Keyframe frame={0} />
                                    <Keyframe frame={32} />
                                </div>
                            )}
                        </div>
                    ))}
                </div>
                <span className="absolute inset-y-0 left-[354px] w-[11px] bg-white/12" />
            </div>

            <span className="absolute top-[5px] bottom-0 left-[354px] w-px bg-[#ff1010]" />
            <span className="absolute top-[19px] left-[348px]">
                <Svg w={13} h={15}>
                    <path d="M1 3Q1 1 3 1H10Q12 1 12 3V8Q9 9 7 14H6Q4 9 1 8Z" fill="#e0a800" stroke="#6a4c00" strokeWidth=".8" />
                    <path d="M4.500 3V6M6.500 3V11M8.500 3V6" stroke="#4a3400" />
                </Svg>
            </span>
        </div>
    );
}

function TimelinePanel() {
    return (
        <section className="flex-1 flex flex-col bg-[#404040] mt-1">
            <div className="flex h-[20px] text-[12px] border-t border-[#4c4c4c] bg-linear-to-b from-[#2a2a2a] to-[#343434]">
                <div className="w-[75px] flex items-center pl-[2px] bg-[#484848] text-[#dcdcdc] whitespace-nowrap">
                    <Grip />
                    <span className="w-[10px] h-[10px] shrink-0 ml-1 mr-[5px] bg-[#a89474]" />
                    <button>合成 1</button>
                    <Close />
                </div>
                <button className="w-[75px] pr-[5px] border-x border-b border-[#161616] text-[#a4a4a4]">渲染队列</button>
                <div className="flex-1 border-b border-[#161616]" />
            </div>

            <div className="flex-1 flex">
                <div className="w-[697px] shrink-0">
                    <div className="flex items-center h-[36px] text-[#c8910c]">
                        <div className="w-[104px] shrink-0 pl-[9px] whitespace-nowrap">
                            <button className="block h-[17px] font-bold text-[15px] leading-[16px] border-b border-dotted border-[#c8910c]">0;00;01;02</button>
                            <div className="pl-[3px] text-[9px] leading-[12px]">00032 (29.97 fps)</div>
                        </div>
                        <Search id="layer-search" className="w-[313px]" />
                        <button title="流程图" className="w-[46px] flex justify-center">
                            <Svg w={24} h={14}><path d="M0 2H6M0 7H6M0 12H6" strokeWidth="2.500" /><path d="M6 2L10 7L6 12M6 7H15M15 7L19 2M15 7L19 12" /><path d="M16 2H22M16 7H22M16 12H20" strokeWidth="2.500" /></Svg>
                        </button>
                        <button title="即时更新" className="w-[24px] h-[24px] flex items-center justify-center bg-[#262626] border border-black">
                            <Svg w={18} h={18}><path d="M6 5H17V16H6Z" fill="#666" stroke="#888" /><path d="M1.500 1.500H12.500V12.500H1.500ZM4.500 4.500H9.500V9.500H4.500ZM1.500 1.500L4.500 4.500M12.500 1.500L9.500 4.500M1.500 12.500L4.500 9.500M12.500 12.500L9.500 9.500" /></Svg>
                        </button>
                        <button title="3D 草图" className="w-[29px] flex justify-center">
                            <Svg w={20} h={17}>
                                <path d="M4.500 0V9M0 4.500H9M1 1L8 8M8 1L1 8" />
                                <path d="M12.500 4L19 7L12.500 10.500L6.500 7Z" fill="#e0e0e0" stroke="none" />
                                <path d="M6.500 7.500L12 11V17L6.500 13.500Z" fill="#b8b8b8" stroke="none" />
                                <path d="M19 7.500L13 11V17L19 13.500Z" fill="#8a8a8a" stroke="none" />
                            </Svg>
                        </button>
                        <button title="隐藏图层" className="ml-[6px] w-[26px] flex justify-center">
                            <Svg w={18} h={15}><path d="M0 8H18V15H0Z" fill="#a4a4a4" stroke="none" /><path d="M4 5Q9 -3 14 5V8H11V12H7V8H4Z" fill="#e0e0e0" stroke="#444" strokeWidth=".6" /><path d="M7 4V6M11 4V6" stroke="#444" /></Svg>
                        </button>
                        <button title="帧融合" className="w-[26px] flex justify-center">
                            <Svg w={19} h={16}><path d="M1 6H5V15H1ZM4 5H8V14H4ZM7 3H11V13H7Z" fill="#666" strokeDasharray="2 1" /><path d="M10 1V13M18 0V12" strokeWidth="2" strokeDasharray="2 1" /><path d="M11 1.500H17M11 6.500H17M11 11.500H17M13 1V12" /></Svg>
                        </button>
                        <button title="运动模糊" className="w-[26px] flex justify-center">
                            <Svg w={18} h={17}>
                                <circle cx="6" cy="11.500" r="5" fill="#777" stroke="none" />
                                <circle cx="8" cy="9" r="5.500" fill="#949494" stroke="#666" strokeWidth=".5" />
                                <circle cx="11.500" cy="6" r="5.700" fill="#bcbcbc" stroke="#777" strokeWidth=".5" />
                            </Svg>
                        </button>
                        <button title="脑风暴" className="ml-[7px] w-[26px] flex justify-center">
                            <Svg w={20} h={17}>
                                <path d="M11 0Q19 0 19 6Q19 12 11 12Q4 12 3 6Q4 0 11 0Z" fill="#bcbcbc" stroke="none" />
                                <circle cx="5" cy="13" r="2" fill="#bcbcbc" stroke="none" /><circle cx="2" cy="15.500" r="1" fill="#bcbcbc" stroke="none" />
                                <path d="M8 4.500Q11 .5 14 4.500L12 8V10H10V8Z" fill="#fff" stroke="#555" strokeWidth=".7" />
                            </Svg>
                        </button>
                        <button title="自动关键帧" className="w-[26px] flex justify-center">
                            <Svg w={15} h={17}><circle cx="8" cy="10.500" r="5" fill="#777" strokeWidth="2" /><path d="M8 5V1M5 1.500H11M1 3L5 6M14 4L11 6.500" strokeWidth="1.500" /></Svg>
                        </button>
                        <button title="图表编辑" className="w-[28px] flex justify-center">
                            <Svg w={20} h={16}><path d="M0 2.500H20M0 7.500H20M0 12.500H20M3.500 0V16" stroke="#999" /><path d="M1 12C5 2 8 2 11 8S16 12 19 10" stroke="#ddd" strokeWidth="1.500" /></Svg>
                        </button>
                    </div>
                    <LayerTable />
                </div>
                <Tracks />
            </div>
        </section>
    );
}

export default function App() {
    return (
        <main className="min-h-screen flex flex-col bg-[#121212] select-none cursor-default font-['DejaVu_Sans_Condensed','Noto_Sans_CJK_SC',sans-serif]">
            <ToolBar />
            <div className="flex gap-1 mt-[3px]">
                <ProjectPanel />
                <CompPanel />
            </div>
            <TimelinePanel />
        </main>
    );
}
